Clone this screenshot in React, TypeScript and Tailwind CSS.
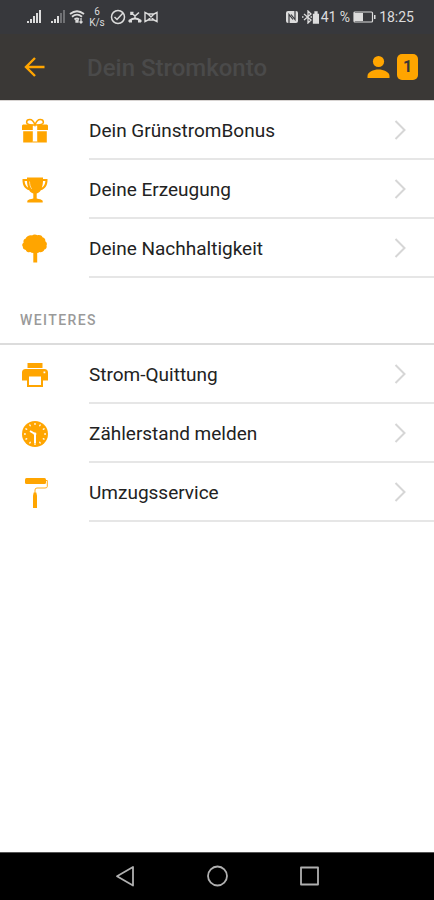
import type { ReactNode } from "react";

type Item = {
  label: string;
  icon: ReactNode;
};

const GiftIcon = () => (
  <svg viewBox="0 0 26 26" className="size-[26px]" fill="currentColor" aria-hidden="true">
    <path
      d="M13 7C10 7 4.600 7 4.600 4.200C4.600 2.400 6.200 1.500 7.800 1.500C10.200 1.500 12 4.200 13 7C14 4.200 15.800 1.500 18.200 1.500C19.800 1.500 21.400 2.400 21.400 4.200C21.400 7 16 7 13 7Z"
      fill="none"
      stroke="currentColor"
      strokeWidth="1.500"
    />
    <path d="M1 6.500h9.800V12H0V7.500zM15.200 6.500H25l1 1V12H15.200zM1.200 13.200h9.600V24.500H1.200zM15.200 13.200h9.600V24.500h-9.600z" />
    <path d="M10.800 23.500h4.400v1h-4.400z" />
  </svg>
);

const TrophyIcon = () => (
  <svg viewBox="0 0 26 26" className="size-[26px]" fill="currentColor" aria-hidden="true">
    <path d="M5 .5h16V2h4.500c.3 6.200-2.200 9.800-6.700 11.300-1 1.700-2.300 2.700-4.100 3.300v4.900c2.700.5 5 1 6 2.200V25.500H5.300v-1.800c1-1.200 3.300-1.700 6-2.200v-4.900c-1.800-.6-3.100-1.600-4.100-3.300C2.700 11.800.2 8.200.5 2H5zM2.600 4c.3 3.200 1.400 5.400 3.600 6.700C5.400 8.600 5.100 6.500 5 4zM21 4c-.1 2.500-.4 4.600-1.200 6.700 2.200-1.300 3.300-3.500 3.600-6.700z" />
    <path d="M7.500 4.500c.2 3.200.8 5.500 2.200 7.300" fill="none" stroke="#fff" strokeWidth=".6" />
  </svg>
);

const TreeIcon = () => (
  <svg viewBox="0 0 26 30" className="h-[30px] w-[26px]" fill="currentColor" aria-hidden="true">
    <path d="M10 1.500c1.600-1.600 4.200-1.200 5.400-.2 2.500-.6 4.500.3 5.100 2 2.200.5 3.200 2.200 2.700 3.900 1.700 1 2.100 2.900 1.300 4.300.6 2-.4 3.600-2.100 4-.8 2.300-3 3.200-5 2.600-.8.6-1.400.8-2.200.9V28.500h-3.900V19c-1.200 0-2.300-.3-3-.9-2.200.4-4-.5-4.500-2.200-2-.1-3.200-1.500-2.900-3.100C-.2 11.600 0 9.700 1.600 8.700 1 6.700 2 5 3.700 4.600 4.300 2.500 7.600.7 10 1.500z" />
  </svg>
);

const PrinterIcon = () => (
  <svg viewBox="0 0 26 26" className="size-[26px]" fill="currentColor" aria-hidden="true">
    <path d="M5.500 1h15v5h-15z" />
    <path
      fillRule="evenodd"
      d="M3.500 7h19C24.700 7 26 8.500 26 10.500v8h-5V25H5v-6.500H0v-8C0 8.500 1.300 7 3.500 7zM7 14.500V23h12v-8.500zM21.500 9.500v1.800h1.800V9.500z"
    />
  </svg>
);

const ClockIcon = () => (
  <svg viewBox="0 0 26 26" className="size-[26px]" aria-hidden="true">
    <circle cx="13" cy="13" r="13" fill="currentColor" />
    <circle
      cx="13"
      cy="13"
      r="10"
      fill="none"
      stroke="#fff"
      strokeWidth="2"
      pathLength="120"
      strokeDasharray="2.400 7.600"
      strokeDashoffset="1.200"
    />
    <path d="M13 22v-9L8 10" fill="none" stroke="#fff" strokeWidth="2" />
    <circle cx="13" cy="13" r="1.400" fill="#fff" />
  </svg>
);

const PaintRollerIcon = () => (
  <svg viewBox="0 0 26 32" className="h-8 w-[26px]" fill="currentColor" aria-hidden="true">
    <rect x="3" y="1" width="21" height="6" rx="1.500" />
    <path
      d="M24 3.500h1.300V9.500Q25.300 11 23 11H15Q13 11 13 13V16"
      fill="none"
      stroke="currentColor"
      strokeWidth=".9"
    />
    <path d="M11.700 15.500h2.600l.7 3V31h-4V18.500z" />
  </svg>
);

const mainItems: Item[] = [
  { label: "Dein GrünstromBonus", icon: <GiftIcon /> },
  { label: "Deine Erzeugung", icon: <TrophyIcon /> },
  { label: "Deine Nachhaltigkeit", icon: <TreeIcon /> },
];

const moreItems: Item[] = [
  { label: "Strom-Quittung", icon: <PrinterIcon /> },
  { label: "Zählerstand melden", icon: <ClockIcon /> },
  { label: "Umzugsservice", icon: <PaintRollerIcon /> },
];

function MenuList({ items }: { items: Item[] }) {
  return (
    <ul>
      {items.map((item) => (
        <li key={item.label}>
          <a href="#" className="flex h-[59px] pl-[22px]">
            <span className="flex w-[67px] items-center text-[#ffa500]">
              {item.icon}
            </span>
            <span className="flex flex-1 items-center justify-between border-b-2 border-[#e6e6e6] pr-7 text-[19px] text-[#222]">
              <span className="pt-[3px]">{item.label}</span>
              <svg viewBox="0 0 12 20" className="h-5 w-3" fill="none" stroke="#d6d6d6" strokeWidth="2" aria-hidden="true">
                <path d="M1.500 1l9 9-9 9" />
              </svg>
            </span>
          </a>
        </li>
      ))}
    </ul>
  );
}

function StatusBar() {
  return (
    <div className="flex h-[34px] items-center justify-between bg-[#37383c] pr-5 pl-[27px] text-[#dcdcdc]">
      <div className="flex items-center">
        <svg viewBox="0 0 15 14" className="h-[14px] w-[15px]" fill="currentColor" aria-hidden="true">
          <path d="M0 11h2v2H0zM3 9h2v4H3zM6 6h2v7H6zM9 3h2v10H9zM12 0h2v13h-2z" />
        </svg>
        <svg viewBox="0 0 15 14" className="ml-[9px] h-[14px] w-[15px]" fill="currentColor" aria-hidden="true">
          <path d="M0 11h2v2H0zM3 9h2v4H3zM6 6h2v7H6z" />
          <path d="M9 3h2v10H9zM12 0h2v13h-2z" opacity=".35" />
        </svg>
        <svg viewBox="0 0 16 14" className="ml-[3px] h-[14px] w-4" fill="none" stroke="currentColor" strokeWidth="1.800" aria-hidden="true">
          <path d="M1 4Q8-1.500 15 4M3 6.800Q8 2.500 13 6.800M5.500 9.500Q8 7.500 10 9.500" />
          <path d="M7 10.500h2v1.500H7zM12 8v5M10.500 11.500L12 13l1.500-1.500" strokeWidth="1.300" />
        </svg>
        <div className="ml-1 w-4 text-center text-[10px] leading-[11px]">
          <div>6</div>
          <div>K/s</div>
        </div>
        <svg viewBox="0 0 16 16" className="ml-[5px] size-4" fill="none" stroke="currentColor" strokeWidth="1.500" aria-hidden="true">
          <circle cx="8" cy="8" r="6.500" />
          <path d="M4.500 8l2.500 2.500L13 4" />
        </svg>
        <svg viewBox="0 0 14 14" className="ml-[2px] size-[14px]" fill="none" stroke="currentColor" strokeWidth="1.600" aria-hidden="true">
          <path d="M3 2.500l4 3.500 4-3.500M3 5V2.500h2.500" />
          <path d="M7 6.500v2" />
          <path d="M1.500 12v-1.500Q7 6.500 12.500 10.500V12M1 11.500h3M10 11.500h3" strokeWidth="2" />
        </svg>
        <svg viewBox="0 0 14 14" className="ml-[2px] size-[14px]" fill="none" stroke="currentColor" strokeWidth="1.400" aria-hidden="true">
          <path d="M1 2.500v9l3-1.500h6l3 1.500v-9L10 4H4zM4 4l6 6M10 4l-6 6" />
        </svg>
      </div>
      <div className="flex items-center text-sm">
        <svg viewBox="0 0 14 14" className="size-[14px]" aria-hidden="true">
          <rect x="1" y="1" width="12" height="12" rx="2" fill="currentColor" />
          <path d="M4 13V4.500L8 9.500M10 1v8.500L6 4.500" fill="none" stroke="#37383c" strokeWidth="1.200" />
        </svg>
        <svg viewBox="0 0 17 14" className="ml-[3px] h-[14px] w-[17px]" fill="none" stroke="currentColor" strokeWidth="1.300" aria-hidden="true">
          <path d="M2 4l7 6-3 3V1l3 3-7 6M0 7h1.500M8.500 7H10" />
          <path d="M11.500 4.500h5V13h-5zM13 2h2v2h-2z" fill="currentColor" />
        </svg>
        <span className="ml-[2px]">41 %</span>
        <svg viewBox="0 0 23 12" className="mx-[3px] h-3 w-[23px]" aria-hidden="true">
          <rect x="1" y="1" width="18.500" height="10" rx="1" fill="none" stroke="currentColor" strokeWidth="1.200" />
          <path d="M1 2h9v8H1zM21 4h1.500v4H21z" fill="currentColor" />
        </svg>
        <span>18:25</span>
      </div>
    </div>
  );
}

export default function App() {
  return (
    <div className="flex min-h-screen flex-col bg-white font-[Roboto,sans-serif]">
      <StatusBar />

      <header className="flex h-[66px] items-center bg-[#3a3836] pr-4 pl-6">
        <button type="button" aria-label="Zurück" className="text-[#ffa500]">
          <svg viewBox="0 0 22 22" className="size-[22px]" fill="none" stroke="currentColor" strokeWidth="2.400" aria-hidden="true">
            <path d="M20.500 11H2.500M11 2l-9 9 9 9" />
          </svg>
        </button>
        <h1 className="ml-[41px] flex-1 pt-[2px] text-2xl font-medium text-[#4a4a4a]">
          Dein Stromkonto
        </h1>
        <button type="button" className="flex items-center gap-[7px] text-[#ffa500]" aria-label="Profil, 1 Nachricht">
          <svg viewBox="0 0 24 24" className="size-6" fill="currentColor" aria-hidden="true">
            <circle cx="12.500" cy="6.500" r="5.600" />
            <path d="M1.500 23v-2C1.500 17 7.500 14.500 12.500 14.500s11 2.500 11 6.500v2z" />
          </svg>
          <span className="flex h-[26px] w-[21px] items-center justify-center rounded-[5px] bg-[#ffa500] text-base font-bold text-[#3a3836]">
            1
          </span>
        </button>
      </header>

      <main className="flex-1 border-t border-[#d8d4d2]">
        <MenuList items={mainItems} />
        <h2 className="mt-8 border-b-2 border-[#dcdcdc] pb-3 pl-5 text-sm leading-[21px] font-medium tracking-widest text-[#9a9a9a]">
          WEITERES
        </h2>
        <MenuList items={moreItems} />
      </main>

      <nav className="flex h-12 items-center justify-center gap-[68px] border-t border-[#555] bg-black text-[#b0b0b0]">
        <button type="button" aria-label="Zurück">
          <svg viewBox="0 0 24 24" className="size-6" fill="none" stroke="currentColor" strokeWidth="1.800" strokeLinejoin="round" aria-hidden="true">
            <path d="M20 2v18.500L4 11.200z" />
          </svg>
        </button>
        <button type="button" aria-label="Startseite">
          <svg viewBox="0 0 24 24" className="size-6" fill="none" stroke="currentColor" strokeWidth="1.800" aria-hidden="true">
            <circle cx="12.500" cy="11" r="9.500" />
          </svg>
        </button>
        <button type="button" aria-label="Übersicht">
          <svg viewBox="0 0 24 24" className="size-6" fill="none" stroke="currentColor" strokeWidth="1.800" strokeLinejoin="round" aria-hidden="true">
            <path d="M4 2.500h17v17H4z" />
          </svg>
        </button>
      </nav>
    </div>
  );
}
